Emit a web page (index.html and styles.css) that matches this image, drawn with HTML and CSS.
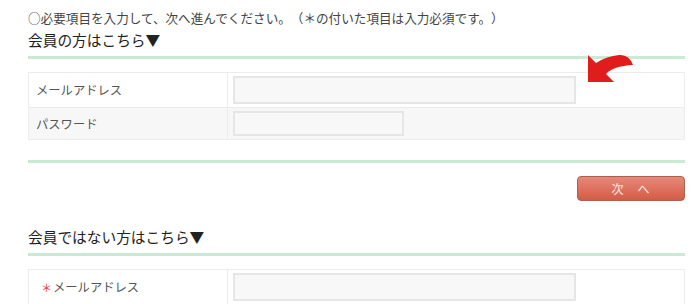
FILE: index.html
```html
<!DOCTYPE html>
<html lang="ja">
<head>
<meta charset="utf-8">
<link rel="stylesheet" href="styles.css">
</head>
<body>
<div class="page">
  <p class="note">○必要項目を入力して、次へ進んでください。（＊の付いた項目は入力必須です。）</p>
  <h2 class="sec-title">会員の方はこちら▼</h2>
  <div class="table-wrap">
    <table class="form-table">
      <tr class="row-white">
        <th>メールアドレス</th>
        <td><input class="field field-long" type="text"></td>
      </tr>
      <tr class="row-gray">
        <th>パスワード</th>
        <td><input class="field field-short" type="password"></td>
      </tr>
    </table>
    <svg class="arrow" width="50" height="34" viewBox="0 0 50 34" aria-hidden="true">
      <path d="M2 3 L2 30 L28 30 L20 22 Q27 14 47 13 Q43 2 33 3 Q21 4 10 11 Z" fill="#e01c1c"/>
    </svg>
  </div>
  <div class="divider"></div>
  <div class="btn-row">
    <button class="btn-next" type="button">次　へ</button>
  </div>
  <h2 class="sec-title sec-title-2">会員ではない方はこちら▼</h2>
  <table class="form-table form-table-2">
    <tr class="row-white">
      <th><span class="req">＊</span>メールアドレス</th>
      <td><input class="field field-long" type="text"></td>
    </tr>
  </table>
</div>
</body>
</html>
```
FILE: styles.css
```css
html, body {
  margin: 0;
  padding: 0;
  background: #ffffff;
}
body {
  font-family: "Noto Sans CJK JP", "Noto Sans", sans-serif;
  color: #333333;
  text-spacing-trim: space-all;
}
.page {
  width: 657px;
  padding: 9px 0 0 28px;
}
.note {
  margin: 0;
  font-size: 12.6px;
  line-height: 18px;
  color: #444444;
  white-space: nowrap;
  text-spacing-trim: space-all;
}
.sec-title {
  margin: 3px 0 0 0;
  font-size: 14.7px;
  font-weight: normal;
  line-height: 20px;
  color: #222222;
  padding-bottom: 6px;
  border-bottom: 3px solid #c9ebd4;
}
.table-wrap {
  position: relative;
  margin-top: 13px;
}
.form-table {
  width: 100%;
  border-collapse: collapse;
  border: 1px solid #ececec;
}
.form-table th {
  width: 191px;
  text-align: left;
  font-weight: normal;
  font-size: 12.3px;
  color: #555555;
  padding: 0 0 0 7px;
  border: 1px solid #ececec;
}
.form-table td {
  padding: 0 0 0 5px;
  border: 1px solid #ececec;
}
.row-white th, .row-white td {
  background: #ffffff;
  height: 34px;
}
.row-gray th, .row-gray td {
  background: #f7f7f7;
  height: 31px;
}
.field {
  display: block;
  box-sizing: border-box;
  margin: 0;
  border: 2px solid #e6e6e6;
  background: #f8f8f8;
  font-size: 12px;
  outline: none;
}
.field-long {
  width: 343px;
  height: 28px;
}
.field-short {
  width: 171px;
  height: 25px;
}
.arrow {
  position: absolute;
  left: 558px;
  top: -20px;
}
.divider {
  margin-top: 20px;
  height: 3px;
  background: #c9ebd4;
}
.btn-row {
  display: flex;
  justify-content: flex-end;
  margin-top: 13px;
}
.btn-next {
  width: 108px;
  height: 25px;
  border: 1px solid #a4634c;
  border-radius: 4px;
  background: linear-gradient(#e8887a, #d45c45);
  color: #fde8e4;
  font-family: "Noto Sans CJK JP", sans-serif;
  font-size: 12px;
  letter-spacing: 1px;
  padding: 0;
}
.sec-title-2 {
  margin-top: 26px;
}
.form-table-2 {
  margin-top: 13px;
}
.req {
  color: #e03a3a;
  font-size: 11px;
  margin-right: 1px;
  margin-left: 5px;
}
```
